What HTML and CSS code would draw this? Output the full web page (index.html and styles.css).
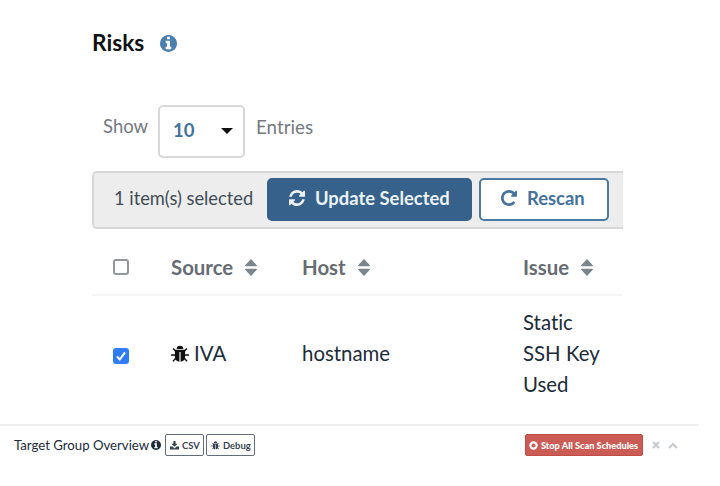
FILE: index.html
```html
<!DOCTYPE html>
<html lang="en">
<head>
    <meta charset="UTF-8">
    <meta name="viewport" content="width=device-width, initial-scale=1.0">
    <title>Risks</title>
    <link rel="stylesheet" href="styles.css">
</head>
<body>
    <svg class="sprite">
        <symbol id="info" viewBox="0 0 1536 1536">
            <path d="M1024 1248v-160q0-14-9-23t-23-9h-96v-512q0-14-9-23t-23-9h-320q-14 0-23 9t-9 23v160q0 14 9 23t23 9h96v320h-96q-14 0-23 9t-9 23v160q0 14 9 23t23 9h448q14 0 23-9t9-23zm-128-896v-160q0-14-9-23t-23-9h-192q-14 0-23 9t-9 23v160q0 14 9 23t23 9h192q14 0 23-9t9-23zm640 416q0 209-103 385.5t-279.5 279.5-385.5 103-385.5-103-279.5-279.5-103-385.5 103-385.5 279.5-279.5 385.5-103 385.5 103 279.5 279.5 103 385.5z"/>
        </symbol>
        <symbol id="bug" viewBox="0 0 18 18">
            <path d="M5.700 4a3.300 3.300 0 0 1 6.600 0z"/>
            <path d="M3.900 4.800h10.200V12c0 2.800-1.900 4.500-4.500 4.700V7H8.400v9.700C5.800 16.500 3.900 14.800 3.900 12z"/>
            <path class="legs" d="M5 6.500 2 3.500M13 6.500l3-3M4.500 10H0M13.500 10H18M5 13l-3 3.300M13 13l3 3.300"/>
        </symbol>
        <symbol id="sort" viewBox="0 0 12 17">
            <path d="M6 0l5.800 6.300q.5 1-.5 1H.7q-1 0-.5-1zM6 17l5.800-6.300q.5-1-.5-1H.7q-1 0-.5 1z"/>
        </symbol>
    </svg>

    <main class="risks">
        <h1 class="title">Risks <svg class="title-info"><use href="#info"/></svg></h1>

        <div class="length">
            <span>Show</span>
            <div class="select">10 <i class="caret"></i></div>
            <span>Entries</span>
        </div>

        <div class="toolbar">
            <span class="count">1 item(s) selected</span>
            <button class="btn btn-primary">
                <svg viewBox="0 0 1536 1536"><path d="M1511 928q0 5-1 7-64 268-268 434.500t-478 166.500q-146 0-282.500-55t-243.500-157l-129 129q-19 19-45 19t-45-19-19-45v-448q0-26 19-45t45-19h448q26 0 45 19t19 45-19 45l-137 137q71 66 161 102t187 36q134 0 250-65t186-179q11-17 53-117 8-23 30-23h192q13 0 22.500 9.500t9.500 22.500zm25-800v448q0 26-19 45t-45 19h-448q-26 0-45-19t-19-45 19-45l138-138q-148-137-349-137-134 0-250 65t-186 179q-11 17-53 117-8 23-30 23h-199q-13 0-22.500-9.500t-9.500-22.500v-7q65-268 270-434.500t480-166.500q146 0 284 55.500t245 156.500l130-129q19-19 45-19t45 19 19 45z"/></svg>
                Update Selected
            </button>
            <button class="btn btn-outline">
                <svg viewBox="0 0 1536 1536"><path d="M1536 128v448q0 26-19 45t-45 19h-448q-42 0-59-40-17-39 14-69l138-138q-148-137-349-137-104 0-198.500 40.500t-163.500 109.500-109.500 163.500-40.500 198.500 40.500 198.500 109.500 163.500 163.500 109.500 198.500 40.500q119 0 225-52t179-147q7-10 23-12 15 0 25 9l137 138q9 8 9.500 20.500t-7.500 22.500q-109 132-264 204.500t-327 72.500q-156 0-298-61t-245-164-164-245-61-298 61-298 164-245 245-164 298-61q147 0 284.500 55.500t244.500 156.500l130-129q29-31 70-14 39 17 39 59z"/></svg>
                Rescan
            </button>
        </div>

        <table class="table">
            <thead>
                <tr>
                    <th class="col-check"><span class="checkbox"></span></th>
                    <th class="col-source">Source <svg class="sort"><use href="#sort"/></svg></th>
                    <th class="col-host">Host <svg class="sort"><use href="#sort"/></svg></th>
                    <th>Issue <svg class="sort"><use href="#sort"/></svg></th>
                </tr>
            </thead>
            <tbody>
                <tr>
                    <td><span class="checkbox checked"><svg viewBox="0 0 16 16"><path d="M4 8.500l2.800 3L12 4.300"/></svg></span></td>
                    <td><svg class="bug"><use href="#bug"/></svg>IVA</td>
                    <td>hostname</td>
                    <td>Static<br>SSH Key<br>Used</td>
                </tr>
            </tbody>
        </table>
    </main>

    <section class="overview">
        <span class="overview-title">Target Group Overview</span>
        <svg class="overview-info"><use href="#info"/></svg>
        <button class="small-btn csv">
            <svg viewBox="0 0 10 10"><path d="M3.800 0h2.400v3h2.300L5 6.500 1.500 3h2.300zM0 6.200h2.800L5 8.200l2.200-2H10V9.500H0z"/></svg>
            CSV
        </button>
        <button class="small-btn debug"><svg><use href="#bug"/></svg> Debug</button>
        <button class="small-btn stop">
            <svg viewBox="0 0 10 10"><circle cx="5" cy="5" r="3.500"/></svg>
            Stop All Scan Schedules
        </button>
        <svg class="close" viewBox="0 0 8 8"><path d="M1 1l6 6M7 1L1 7"/></svg>
        <svg class="collapse" viewBox="0 0 10 7"><path d="M1 6l4-4 4 4"/></svg>
    </section>
</body>
</html>
```
FILE: styles.css
```css
* {
    box-sizing: border-box;
}
body {
    margin: 0;
    background: #fff;
    color: #212b38;
    font-family: Lato, sans-serif;
    font-size: 20.400px;
    font-variant-ligatures: none;
}
svg {
    fill: currentColor;
    flex: none;
}
button {
    font-family: inherit;
    white-space: nowrap;
}
.sprite {
    display: none;
}
.legs {
    fill: none;
    stroke: currentColor;
    stroke-width: 1.4;
}
.risks {
    width: 531px;
    height: 424px;
    margin-left: 92px;
    padding-top: 27px;
}
.title {
    display: flex;
    align-items: center;
    height: 30px;
    margin: 0;
    color: #101114;
    font-size: 22.700px;
    font-weight: bold;
}
.title-info {
    width: 17px;
    height: 17px;
    margin: 2px 0 0 16px;
    color: #4b7fb0;
}

/* Entries selector */
.length {
    display: flex;
    align-items: flex-start;
    gap: 11px;
    margin: 48px 0 0 11px;
    color: #75797d;
    font-size: 18.500px;
    line-height: 43px;
}
.length span:first-child {
    width: 44px;
}
.length span:last-child {
    font-size: 18.800px;
}
.select {
    display: flex;
    align-items: center;
    justify-content: space-between;
    width: 87px;
    height: 53px;
    padding: 0 10px 2px 13px;
    border: 2px solid #d8d8d8;
    border-radius: 5px;
    color: #43729e;
    font-size: 18.500px;
    font-weight: bold;
}
.caret {
    border: 6px solid transparent;
    border-top-color: #111;
    border-bottom: 0;
}

/* Selection toolbar */
.toolbar {
    display: flex;
    align-items: center;
    height: 58px;
    margin-top: 13px;
    padding: 0 0 2px 20px;
    border: 2px solid #d6d7d8;
    border-right: 0;
    border-radius: 5px 0 0 5px;
    background: #ededed;
    color: #424b57;
    font-size: 18.300px;
}
.count {
    width: 153px;
    margin-top: -3px;
}
.btn {
    display: flex;
    align-items: center;
    height: 43px;
    padding: 0 0 3px 20px;
    border: 2px solid #4b7aa4;
    border-radius: 5px;
    font-size: 18.400px;
    font-weight: bold;
}
.btn svg {
    width: 16px;
    height: 16px;
    margin-right: 10px;
}
.btn-primary {
    width: 205px;
    border-color: #35618a;
    background: #35618a;
    color: #edf2f7;
}
.btn-outline {
    width: 130px;
    margin-left: 7px;
    background: #fff;
    color: #43729e;
}

/* Risks table */
.table {
    width: 100%;
    margin-top: 11px;
    border-collapse: collapse;
    table-layout: fixed;
}
.table th {
    height: 55px;
    padding: 0;
    border-bottom: 2px solid #f5f5f6;
    color: #676c72;
    text-align: left;
}
.table td {
    padding: 11px 0 0;
    line-height: 31px;
}
.col-check {
    width: 79px;
}
.col-source {
    width: 131px;
}
.col-host {
    width: 221px;
}
.sort {
    width: 12px;
    height: 17px;
    margin-left: 7px;
    color: #7d858c;
    vertical-align: -1px;
}
.checkbox {
    display: block;
    width: 16px;
    height: 16px;
    margin-left: 21px;
    border: 2px solid #94979a;
    border-radius: 3px;
}
.checked {
    margin-top: 4px;
    border: 0;
    background: #2f7cf6;
}
.checked svg {
    display: block;
    fill: none;
    stroke: #fff;
    stroke-width: 2;
}
.bug {
    width: 18px;
    height: 18px;
    margin-right: 5px;
    color: #111;
    vertical-align: -2px;
}

/* Target group bar */
.overview {
    display: flex;
    align-items: center;
    width: 699px;
    height: 42px;
    padding: 0 0 2px 14px;
    border-top: 2px solid #f0f0f1;
}
.overview-title {
    width: 134px;
    font-size: 13.200px;
    white-space: nowrap;
}
.overview-info {
    width: 10px;
    height: 10px;
    margin: 0 4px 0 3px;
}
.small-btn {
    display: flex;
    align-items: center;
    height: 22px;
    padding: 0 0 0 4px;
    border: 1px solid #626c7a;
    border-radius: 2px;
    background: #fff;
    color: #374250;
    font-size: 9.400px;
    font-weight: bold;
}
.small-btn svg {
    width: 9px;
    height: 9px;
    margin-right: 3px;
}
.csv {
    width: 39px;
}
.debug {
    width: 49px;
    margin-left: 2px;
}
.stop {
    width: 118px;
    margin-left: auto;
    padding-left: 3px;
    border-color: #c34d46;
    background: #cb5c55;
    color: #fff;
    font-size: 9.200px;
    font-weight: 900;
}
.stop circle {
    fill: none;
    stroke: #fff;
    stroke-width: 2.4;
}
.close,
.collapse {
    fill: none;
    stroke: #c5cace;
    stroke-width: 2;
}
.close {
    width: 8px;
    height: 8px;
    margin-left: 9px;
}
.collapse {
    width: 10px;
    height: 7px;
    margin: 0 21px 0 8px;
}
```
